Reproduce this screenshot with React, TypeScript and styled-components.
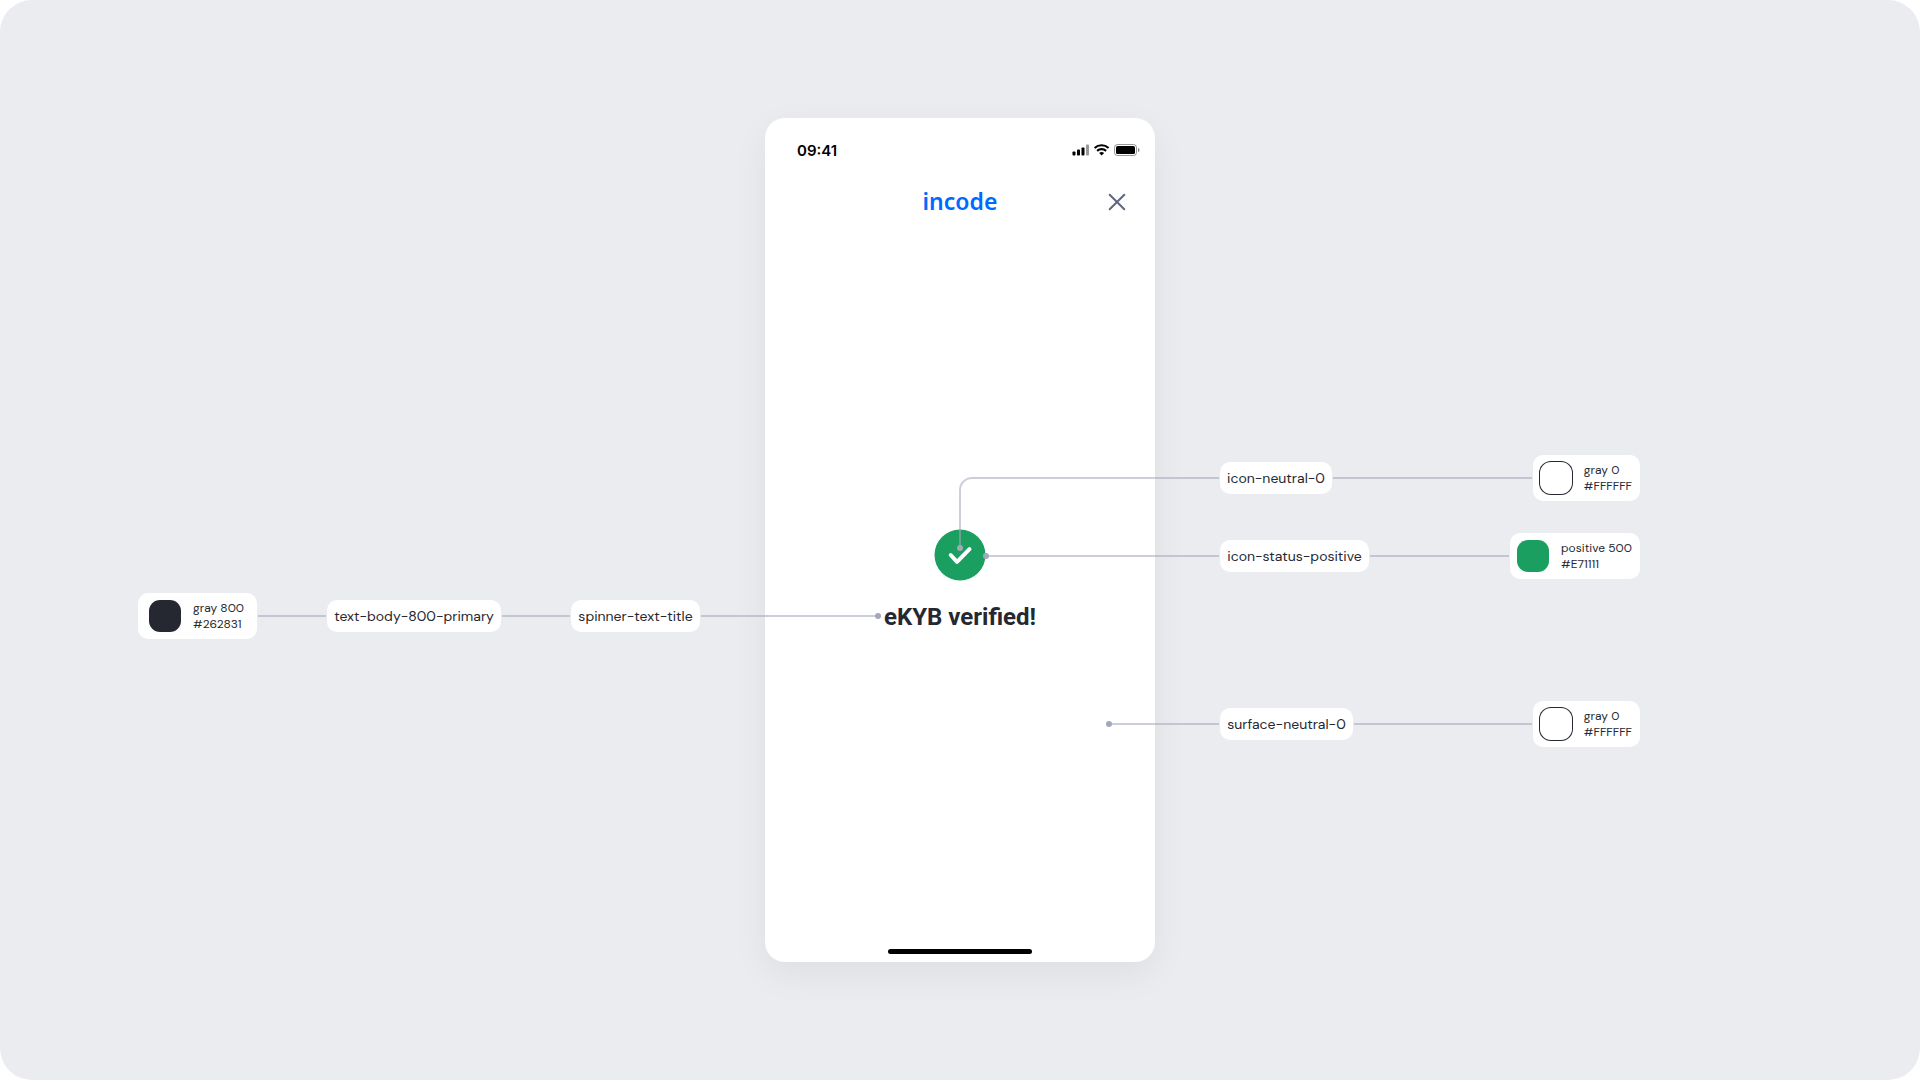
import React from "react";
import styled, { createGlobalStyle } from "styled-components";

const ink = "#262831";
const wire = "rgba(163, 167, 186, 0.55)";
const knob = "#a3a7ba";

const GlobalStyle = createGlobalStyle`
  *, *::before, *::after { box-sizing: border-box; }
  body { margin: 0; background: #ffffff; font-family: Inter, "Liberation Sans", sans-serif; color: ${ink}; }
  h1, p, dl, dt, dd { margin: 0; }
`;

const Board = styled.main`
  min-height: 100vh;
  display: flex;
  align-items: center;
  justify-content: center;
  background: #ebecf0;
  border-radius: 32px;
  overflow: hidden;
`;

const Stage = styled.div`
  position: relative;
`;

const Phone = styled.section`
  width: 390px;
  height: 844px;
  display: flex;
  flex-direction: column;
  background: #ffffff;
  border-radius: 20px;
  box-shadow: 0 12px 36px rgba(0, 0, 0, 0.06);
`;

const StatusBar = styled.div`
  display: flex;
  align-items: center;
  justify-content: space-between;
  height: 48px;
  margin-top: 8px;
  padding: 0 15px 0 32px;
`;

const Clock = styled.time`
  padding-top: 2px;
  font-size: 15px;
  line-height: 20px;
  font-weight: 600;
  color: #000000;
`;

const Header = styled.header`
  display: grid;
  grid-template-columns: 1fr auto 1fr;
  align-items: center;
  height: 56px;
  padding: 0 24px;
`;

const Logo = styled.span`
  grid-column: 2;
  padding-bottom: 2px;
  font-family: "Noto Sans", "Open Sans", sans-serif;
  font-size: 23px;
  line-height: 32px;
  font-weight: 600;
  color: #006aff;
`;

const CloseButton = styled.button`
  justify-self: end;
  display: flex;
  align-items: center;
  justify-content: center;
  width: 28px;
  height: 28px;
  padding: 0;
  border: 0;
  background: transparent;
  cursor: pointer;
`;

const Result = styled.div`
  flex: 1;
  display: flex;
  flex-direction: column;
  align-items: center;
  justify-content: center;
  gap: 20px;
  padding-bottom: 18px;
`;

const Title = styled.h1`
  font-family: Roboto, Inter, sans-serif;
  font-size: 24px;
  line-height: 32px;
  font-weight: 700;
  white-space: nowrap;
`;

const HomeArea = styled.div`
  display: flex;
  justify-content: center;
  padding-bottom: 8px;
`;

const HomeIndicator = styled.div`
  width: 144px;
  height: 5px;
  border-radius: 3px;
  background: #000000;
`;

const Note = styled.div<{ $x: number; $y: number; $width: number }>`
  position: absolute;
  left: ${(p) => p.$x}px;
  top: ${(p) => p.$y}px;
  width: ${(p) => p.$width}px;
  height: 46px;
  display: flex;
  align-items: center;
`;

const Wire = styled.span<{ $width?: number }>`
  flex: ${(p) => (p.$width ? `0 0 ${p.$width}px` : "1")};
  height: 2px;
  margin: 0 1px;
  background: ${wire};
`;

const Knob = styled.span<{ $side: "start" | "end" }>`
  flex: none;
  width: 6px;
  height: 6px;
  margin: ${(p) => (p.$side === "start" ? "0 -1px 0 0" : "0 0 0 -1px")};
  border-radius: 50%;
  background: ${knob};
`;

const Elbow = styled.svg`
  position: absolute;
  left: 191px;
  top: 358px;
`;

const Token = styled.span<{ $width: number }>`
  flex: none;
  display: flex;
  align-items: center;
  justify-content: center;
  width: ${(p) => p.$width}px;
  height: 32px;
  border-radius: 10px;
  background: #ffffff;
  font-family: "DM Sans", Inter, sans-serif;
  font-size: 14px;
  line-height: 20px;
  white-space: nowrap;
`;

const ColorCard = styled.div<{ $wide?: boolean }>`
  flex: none;
  display: flex;
  align-items: center;
  gap: 12px;
  height: 46px;
  padding: ${(p) => (p.$wide ? "0 13px 0 11px" : "0 8px 0 7px")};
  border-radius: 10px;
  background: #ffffff;
`;

const Swatch = styled.span<{ $color: string; $outlined?: boolean }>`
  width: 32px;
  height: 32px;
  border-radius: 11px;
  background: ${(p) => p.$color};
  box-shadow: ${(p) => (p.$outlined ? `0 0 0 1px ${ink}` : "none")};
`;

const ColorText = styled.dl`
  font-family: "DM Sans", Inter, sans-serif;
  font-size: 12px;
  line-height: 16px;
  white-space: nowrap;
`;

type ColorProps = { name: string; hex: string; fill: string; outlined?: boolean; wide?: boolean };

const Color = ({ name, hex, fill, outlined, wide }: ColorProps) => (
  <ColorCard $wide={wide}>
    <Swatch $color={fill} $outlined={outlined} />
    <ColorText>
      <dt>{name}</dt>
      <dd>{hex}</dd>
    </ColorText>
  </ColorCard>
);

const StatusIcons = () => (
  <svg width="68" height="12" viewBox="0 0 68 12" aria-hidden="true">
    <rect x="0.5" y="7.5" width="3" height="4" rx="0.8" />
    <rect x="5" y="5.5" width="3" height="6" rx="0.8" />
    <rect x="9.5" y="3.5" width="3" height="8" rx="0.8" />
    <rect x="14" y="0.5" width="3" height="11" rx="0.8" opacity="0.4" />
    <g fill="none" stroke="#000" strokeWidth="2.1">
      <path d="M22.6 4a10.3 10.3 0 0 1 14 0" />
      <path d="M25.1 6.9a6.7 6.7 0 0 1 9 0" />
    </g>
    <path d="M27.1 9.1a4 4 0 0 1 5 0L29.6 11.6z" />
    <rect x="42.5" y="0.5" width="22" height="11" rx="3" fill="none" stroke="#000" strokeOpacity="0.4" />
    <rect x="44" y="2" width="19" height="8" rx="1.6" />
    <path d="M66 4v4c1-.3 1.5-1 1.5-2s-.5-1.7-1.5-2z" opacity="0.45" />
  </svg>
);

const App = () => (
  <>
    <GlobalStyle />
    <Board>
      <Stage>
        <Phone>
          <StatusBar>
            <Clock>09:41</Clock>
            <StatusIcons />
          </StatusBar>
          <Header>
            <Logo>incode</Logo>
            <CloseButton type="button" aria-label="Close">
              <svg width="18" height="18" viewBox="0 0 18 18" fill="none" stroke="#60667c" strokeWidth="2" strokeLinecap="round">
                <path d="M1.7 1.7l14.6 14.6M16.3 1.7L1.7 16.3" />
              </svg>
            </CloseButton>
          </Header>
          <Result>
            <svg width="52" height="52" viewBox="0 0 52 52" fill="none" aria-hidden="true">
              <circle cx="26" cy="26" r="25.5" fill="#1a9f60" />
              <path d="M16.7 26l6.3 6.8L35.5 20.2" stroke="#fff" strokeWidth="4" strokeLinecap="round" strokeLinejoin="round" />
            </svg>
            <Title>eKYB verified!</Title>
          </Result>
          <HomeArea>
            <HomeIndicator />
          </HomeArea>
        </Phone>

        <Note $x={-627} $y={475} $width={743}>
          <Color name="gray 800" hex="#262831" fill={ink} wide />
          <Wire />
          <Token $width={174}>text-body-800-primary</Token>
          <Wire $width={68} />
          <Token $width={129}>spinner-text-title</Token>
          <Wire $width={174} />
          <Knob $side="end" />
        </Note>

        <Elbow width="18" height="76" viewBox="0 0 18 76" fill="none" aria-hidden="true">
          <path d="M4 72V14A12 12 0 0 1 16 2" stroke={wire} strokeWidth="2" />
          <circle cx="4" cy="72" r="3" fill={knob} />
        </Elbow>
        <Note $x={206} $y={337} $width={669}>
          <Wire $width={247} />
          <Token $width={112}>icon-neutral-0</Token>
          <Wire />
          <Color name="gray 0" hex="#FFFFFF" fill="#ffffff" outlined />
        </Note>

        <Note $x={218} $y={415} $width={657}>
          <Knob $side="start" />
          <Wire $width={230} />
          <Token $width={149}>icon-status-positive</Token>
          <Wire />
          <Color name="positive 500" hex="#E71111" fill="#1a9f60" />
        </Note>

        <Note $x={341} $y={583} $width={534}>
          <Knob $side="start" />
          <Wire $width={107} />
          <Token $width={133}>surface-neutral-0</Token>
          <Wire />
          <Color name="gray 0" hex="#FFFFFF" fill="#ffffff" outlined />
        </Note>
      </Stage>
    </Board>
  </>
);

export default App;
